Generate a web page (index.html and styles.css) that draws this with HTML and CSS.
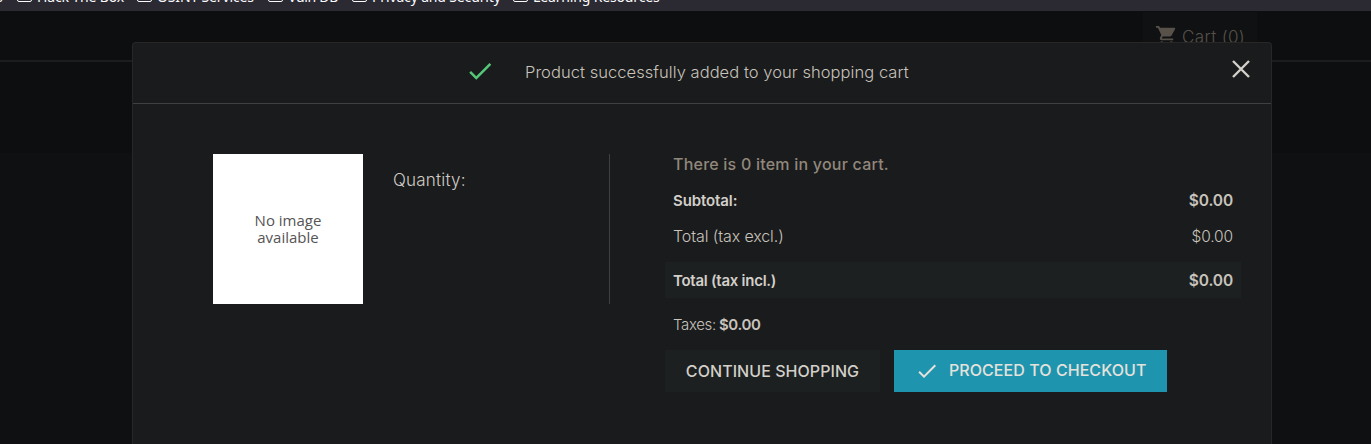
FILE: index.html
```html
<!DOCTYPE html>
<html lang="en">
<head>
<meta charset="utf-8">
<title>Shopping cart</title>
<link rel="stylesheet" href="styles.css">
</head>
<body>
<nav class="bookmarks">
  <span class="bookmark tail"><span class="label">s</span></span>
  <span class="bookmark hack"><i class="folder"></i><span class="label">Hack The Box</span></span>
  <span class="bookmark osint"><i class="folder"></i><span class="label">OSINT Services</span></span>
  <span class="bookmark vuln"><i class="folder"></i><span class="label">Vuln DB</span></span>
  <span class="bookmark privacy"><i class="folder"></i><span class="label">Privacy and Security</span></span>
  <span class="bookmark learning"><i class="folder"></i><span class="label">Learning Resources</span></span>
</nav>
<header class="site-header">
  <div class="cart">
    <svg class="cart-icon" viewBox="0 0 24 24"><path d="M7 18c-1.1 0-2 .9-2 2s.9 2 2 2 2-.9 2-2-.9-2-2-2zM1 2v2h2l3.600 7.590-1.350 2.450C4.520 15.370 5.480 17 7 17h12v-2H7.420c-.14 0-.25-.11-.25-.25l.03-.12.900-1.630h7.450c.75 0 1.410-.41 1.750-1.030l3.580-6.490A1 1 0 0 0 20 4H5.210l-.94-2zM17 18c-1.100 0-2 .9-2 2s.9 2 2 2 2-.9 2-2-.9-2-2-2z"/></svg>
    <span class="cart-label">Cart (0)</span>
  </div>
</header>
<div class="nav-band"></div>
<section class="modal">
  <div class="modal-header">
    <svg class="done" viewBox="0 0 24 24"><path d="M9 16.170L4.830 12l-1.420 1.410L9 19 21 7l-1.410-1.410z"/></svg>
    <h1 class="title">Product successfully added to your shopping cart</h1>
    <svg class="close" viewBox="0 0 18 18"><path d="M1 1L17 17M17 1L1 17"/></svg>
  </div>
  <div class="modal-body">
    <div class="product">
      <div class="thumb"><span class="no-image">No image</span><span class="available">available</span></div>
      <span class="quantity">Quantity:</span>
    </div>
    <div class="summary">
      <p class="row heading"><span class="count">There is 0 item in your cart.</span></p>
      <p class="row"><span class="strong subtotal">Subtotal:</span><span class="price strong-price">$0.00</span></p>
      <p class="row"><span class="excl">Total (tax excl.)</span><span class="price light-price">$0.00</span></p>
      <p class="row total"><span class="strong incl">Total (tax incl.)</span><span class="price strong-price">$0.00</span></p>
      <p class="row taxes"><span class="taxes-label">Taxes:</span><span class="taxes-value">$0.00</span></p>
      <div class="actions">
        <button class="btn secondary"><span class="continue">CONTINUE SHOPPING</span></button>
        <button class="btn primary"><svg class="btn-icon" viewBox="0 0 24 24"><path d="M9 16.170L4.830 12l-1.420 1.410L9 19 21 7l-1.410-1.410z"/></svg><span class="proceed">PROCEED TO CHECKOUT</span></button>
      </div>
    </div>
  </div>
</section>
</body>
</html>
```
FILE: styles.css
```css
* { box-sizing: border-box; }
body {
  margin: 0;
  height: 444px;
  overflow: hidden;
  position: relative;
  background: #0f1012;
  color: #c8c3bb;
  font-family: Inter, "Liberation Sans", sans-serif;
  font-size: 16px;
}
span, h1 { white-space: nowrap; }
.bookmarks {
  display: flex;
  height: 11px;
  overflow: hidden;
  background: #2b2a33;
  color: #fbfbfe;
  font: 14px/20px "Noto Sans", sans-serif;
  letter-spacing: -0.150px;
}
.bookmark { display: flex; gap: 5px; flex: none; height: 20px; margin-top: -14px; }
.label { margin-top: 0.500px; }
.tail { width: 21px; margin-left: -4px; }
.hack { width: 120px; }
.osint { width: 131px; }
.vuln { width: 84px; letter-spacing: -0.300px; }
.privacy { width: 161px; }
.folder {
  width: 15px;
  height: 13px;
  margin-top: 3px;
  border: 1.500px solid #fbfbfe;
  border-radius: 2px;
}
.site-header {
  display: flex;
  justify-content: flex-end;
  height: 51px;
  padding: 1px 114px 0 0;
  background: #0c0e0f;
  border-bottom: 2px solid #1b1d1f;
}
.cart {
  display: flex;
  width: 114px;
  height: 48px;
  padding-left: 12px;
  background: #0f1112;
  color: #57514a;
}
.cart-icon { width: 23px; height: 23px; margin-top: 12px; fill: #57514a; }
.cart-label { margin: 15px 0 0 4px; line-height: 20px; font-size: 17px; font-weight: 300; letter-spacing: 0.350px; }
.nav-band { height: 91px; background: #0c0e0f; }
.modal {
  position: absolute;
  top: 42px;
  left: 132px;
  width: 1140px;
  height: 402px;
  background: #1a1b1d;
  border: 1px solid #282725;
  border-bottom: 0;
  border-radius: 4px 4px 0 0;
}
.modal-header {
  display: flex;
  height: 61px;
  border-bottom: 1px solid #3e4042;
}
.done { width: 30px; height: 30px; margin: 13px 0 0 332px; fill: #55c878; }
.title { margin: 19px 0 0 30px; font-size: 16.500px; line-height: 20px; font-weight: 300; letter-spacing: 0.050px; }
.close { width: 18px; height: 18px; margin: 17px 21px 0 auto; fill: none; stroke: #d3cfc9; stroke-width: 2.400; }
.modal-body { display: flex; padding: 50px 30px 0 80px; }
.product {
  display: flex;
  gap: 30px;
  width: 397px;
  height: 150px;
  border-right: 1px solid #3e4042;
}
.thumb {
  display: flex;
  flex-direction: column;
  align-items: center;
  justify-content: center;
  width: 150px;
  background: #fff;
  color: #555;
  font: 15px/17px "Open Sans", sans-serif;
}
.quantity { margin-top: 16px; font-size: 17px; line-height: 20px; font-weight: 300; letter-spacing: 0.200px; color: #d0ccc5; }
.summary { width: 576px; margin-left: 55px; }
.row {
  display: flex;
  justify-content: space-between;
  height: 36px;
  margin: 0;
  padding: 0 8px;
  line-height: 36px;
  font-weight: 300;
}
.heading { height: 28px; line-height: 20px; color: #91887b; }
.count { font-weight: 500; letter-spacing: 0.220px; }
.strong { line-height: 37px; font-size: 15px; font-weight: 600; color: #d3cfc9; }
.subtotal { letter-spacing: -0.100px; }
.incl { letter-spacing: -0.260px; }
.excl { letter-spacing: -0.100px; }
.price { line-height: 38px; font-size: 15.500px; letter-spacing: -0.120px; }
.strong-price { font-weight: 600; }
.total { margin-top: 8px; background: #1d2021; }
.taxes { justify-content: flex-start; gap: 3px; height: 52px; padding-top: 9px; font-size: 15px; letter-spacing: -0.350px; }
.taxes-value { font-weight: 600; }
.actions { display: flex; gap: 14px; }
.btn {
  display: flex;
  align-items: center;
  justify-content: center;
  height: 42px;
  padding: 0;
  border: 0;
  color: #d3cfc9;
  font: 500 16px/20px Inter, sans-serif;
  letter-spacing: 0.060px;
}
.secondary { width: 215px; background: #1d2021; }
.primary { width: 273px; background: #1f94ae; color: #e5e2dc; justify-content: flex-start; padding-left: 21px; }
.btn-icon { width: 24px; height: 24px; fill: #e5e2dc; }
.proceed { margin: -2px 0 0 10px; }
```
